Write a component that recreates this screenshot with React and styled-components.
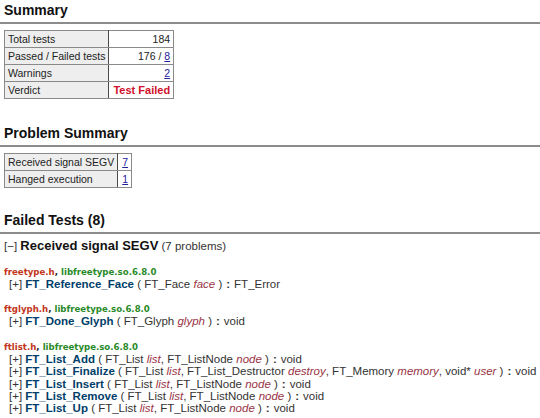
import React from "react";
import styled, { createGlobalStyle } from "styled-components";

const Global = createGlobalStyle`
  html, body { margin: 0; padding: 0; background: #fff; }
  body {
    font-family: "Liberation Sans", Arial, sans-serif;
    color: #222;
    width: 540px;
    height: 418px;
    overflow: hidden;
  }
`;

const Page = styled.div`
  padding: 0 0 0 4px;
  display: flex;
  flex-direction: column;
`;

const Heading = styled.h2`
  margin: ${(p) => p.$top}px 0 0 0;
  font-size: 14px;
  line-height: 16px;
  font-weight: bold;
  color: #111;
  white-space: nowrap;
`;

const Rule = styled.hr`
  margin: 4px 0 ${(p) => p.$after ?? 6}px -4px;
  border: 0;
  height: 2px;
  background: #8c8c8c;
`;

const Table = styled.table`
  border-collapse: collapse;
  font-size: 10.5px;
  align-self: flex-start;
  border: 1px solid #5a5a5a;
`;

const Th = styled.th`
  background: #eeeeee;
  font-weight: normal;
  text-align: left;
  white-space: nowrap;
  border: 1px solid #8a8a8a;
  border-right: 1px solid #4a4a4a;
  padding: 0 3px;
  height: 16px;
  line-height: 14px;
  color: #222;
`;

const Td = styled.td`
  text-align: right;
  white-space: nowrap;
  border: 1px solid #8a8a8a;
  padding: 0 3px 0 4px;
  line-height: 14px;
  color: #222;
  font-weight: ${(p) => (p.$failed ? "bold" : "normal")};
  ${(p) => p.$failed && "color: #d0102a; font-size: 11px;"}
`;

const Link = styled.a`
  color: #22229b;
  text-decoration: underline;
`;

const Section = styled.div`
  margin-top: 4px;
  line-height: 16px;
  white-space: nowrap;
  font-size: 11.5px;
  color: #333;
`;

const SectionTitle = styled.span`
  font-size: 13px;
  font-weight: bold;
  color: #111;
`;

const Group = styled.div`
  display: flex;
  flex-direction: column;
  margin-top: ${(p) => p.$top}px;
`;

const Header = styled.div`
  font-family: "DejaVu Sans", Verdana, sans-serif;
  font-size: 8.6px;
  font-weight: bold;
  line-height: 11px;
  white-space: nowrap;
`;

const HName = styled.span`
  color: #c2361a;
`;

const LibName = styled.span`
  color: #2a8a2a;
`;

const Sig = styled.div`
  padding-left: 5px;
  font-size: 11.5px;
  line-height: 12.4px;
  white-space: nowrap;
  color: #333;
`;

const Name = styled.span`
  font-weight: bold;
  color: #003e69;
`;

const Param = styled.span`
  font-style: italic;
  color: #993344;
`;

const Colon = styled.span`
  font-weight: bold;
  margin: 0 4px;
`;

const groups = [
  {
    header: "freetype.h",
    lib: "libfreetype.so.6.8.0",
    top: 13,
    funcs: [
      { name: "FT_Reference_Face", params: [["FT_Face", "face"]], ret: "FT_Error" },
    ],
  },
  {
    header: "ftglyph.h",
    lib: "libfreetype.so.6.8.0",
    top: 14,
    funcs: [
      { name: "FT_Done_Glyph", params: [["FT_Glyph", "glyph"]], ret: "void" },
    ],
  },
  {
    header: "ftlist.h",
    lib: "libfreetype.so.6.8.0",
    top: 14,
    funcs: [
      { name: "FT_List_Add", params: [["FT_List", "list"], ["FT_ListNode", "node"]], ret: "void" },
      {
        name: "FT_List_Finalize",
        params: [
          ["FT_List", "list"],
          ["FT_List_Destructor", "destroy"],
          ["FT_Memory", "memory"],
          ["void*", "user"],
        ],
        ret: "void",
      },
      { name: "FT_List_Insert", params: [["FT_List", "list"], ["FT_ListNode", "node"]], ret: "void" },
      { name: "FT_List_Remove", params: [["FT_List", "list"], ["FT_ListNode", "node"]], ret: "void" },
      { name: "FT_List_Up", params: [["FT_List", "list"], ["FT_ListNode", "node"]], ret: "void" },
    ],
  },
];

function Signature({ f }) {
  return (
    <Sig>
      [+] <Name>{f.name}</Name> ({" "}
      {f.params.map(([type, name], i) => (
        <React.Fragment key={name}>
          {type} <Param>{name}</Param>
          {i < f.params.length - 1 ? ", " : " "}
        </React.Fragment>
      ))}
      )<Colon>:</Colon>
      {f.ret}
    </Sig>
  );
}

export default function App() {
  return (
    <>
      <Global />
      <Page>
        <Heading $top={2}>Summary</Heading>
        <Rule />
        <Table>
          <tbody>
            <tr>
              <Th>Total tests</Th>
              <Td>184</Td>
            </tr>
            <tr>
              <Th>Passed / Failed tests</Th>
              <Td>
                176 / <Link href="#failed">8</Link>
              </Td>
            </tr>
            <tr>
              <Th>Warnings</Th>
              <Td>
                <Link href="#warnings">2</Link>
              </Td>
            </tr>
            <tr>
              <Th>Verdict</Th>
              <Td $failed>Test Failed</Td>
            </tr>
          </tbody>
        </Table>

        <Heading $top={26}>Problem Summary</Heading>
        <Rule />
        <Table>
          <tbody>
            <tr>
              <Th>Received signal SEGV</Th>
              <Td>
                <Link href="#segv">7</Link>
              </Td>
            </tr>
            <tr>
              <Th>Hanged execution</Th>
              <Td>
                <Link href="#hanged">1</Link>
              </Td>
            </tr>
          </tbody>
        </Table>

        <Heading $top={24}>Failed Tests (8)</Heading>
        <Rule $after={0} />
        <Section>
          [&minus;] <SectionTitle>Received signal SEGV</SectionTitle> (7 problems)
        </Section>

        {groups.map((g) => (
          <Group key={g.header} $top={g.top}>
            <Header>
              <HName>{g.header}</HName>, <LibName>{g.lib}</LibName>
            </Header>
            {g.funcs.map((f) => (
              <Signature key={f.name} f={f} />
            ))}
          </Group>
        ))}
      </Page>
    </>
  );
}
